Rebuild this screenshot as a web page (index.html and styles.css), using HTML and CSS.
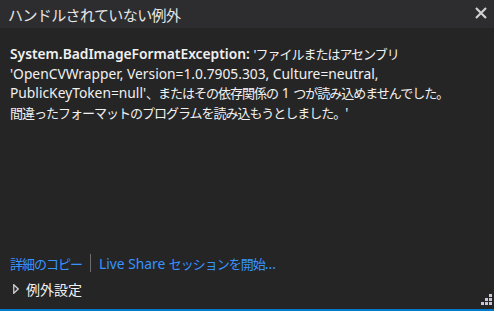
FILE: index.html
```html
<!DOCTYPE html>
<html lang="ja">
<head>
    <meta charset="UTF-8">
    <title>ハンドルされていない例外</title>
    <link rel="stylesheet" href="styles.css">
</head>
<body>
    <div class="popup">
        <div class="title-bar">
            <span class="title">ハンドルされていない例外</span>
            <svg class="close" width="12" height="12" viewBox="0 0 12 12">
                <path d="M1 1 L11 11 M11 1 L1 11" stroke="#d0d0d0" stroke-width="2.2"/>
            </svg>
        </div>
        <div class="content">
            <!-- 日本語部分は字詰めを狭くする -->
            <p class="message"><b>System.BadImageFormatException:</b> <span class="ja">'ファイルまたはアセンブリ</span><br>'OpenCVWrapper, Version=1.0.7905.303, Culture=neutral,<br>PublicKeyToken=null'<span class="ja">、またはその依存関係の</span> 1 <span class="ja">つが読み込めませんでした。</span><br><span class="ja">間違ったフォーマットのプログラムを読み込もうとしました。</span>'</p>
        </div>
        <div class="links">
            <a href="#"><span class="ja">詳細のコピー</span></a>
            <span class="sep"></span>
            <a href="#">Live Share <span class="ja">セッションを開始</span>...</a>
        </div>
        <div class="settings">
            <svg class="arrow" width="6" height="10" viewBox="0 0 6 10">
                <path d="M0.75 0.75 L5.2 5 L0.75 9.25 Z" fill="none" stroke="#cfcfcf" stroke-width="1.3"/>
            </svg>
            <span>例外設定</span>
        </div>
        <svg class="grip" width="12" height="12" viewBox="0 0 12 12">
            <rect x="8" y="0" width="3" height="3" fill="#c8c8d8"/>
            <rect x="4" y="4" width="3" height="3" fill="#c8c8d8"/>
            <rect x="8" y="4" width="3" height="3" fill="#c8c8d8"/>
            <rect x="0" y="8" width="3" height="3" fill="#c8c8d8"/>
            <rect x="4" y="8" width="3" height="3" fill="#c8c8d8"/>
            <rect x="8" y="8" width="3" height="3" fill="#c8c8d8"/>
        </svg>
    </div>
</body>
</html>
```

FILE: styles.css
```css
body {
    margin: 0;
    padding: 0;
    background-color: #252526;
    font-family: "Noto Sans", "Noto Sans CJK JP", sans-serif;
    color: #f1f1f1;
}

.popup {
    position: relative;
    width: 494px;
    height: 311px;
    box-sizing: border-box;
    border-bottom: 2px solid #007acc;
    display: flex;
    flex-direction: column;
}

.title-bar {
    height: 28px;
    background-color: #2d2d30;
    display: flex;
    align-items: center;
    justify-content: space-between;
    padding: 0 7px 0 8px;
}

.title {
    font-size: 15px;
    letter-spacing: -0.6px;
    color: #e6e6e6;
}

.close {
    margin-top: -2px;
}

.content {
    flex: 1;
    padding: 16px 10px 0 10px;
}

.message {
    margin: 0;
    font-size: 13.8px;
    line-height: 19px;
    white-space: nowrap;
    color: #f1f1f1;
}

.message b {
    font-weight: 600;
}

.ja {
    font-size: 13px;
    letter-spacing: -1px;
}

.links {
    display: flex;
    align-items: center;
    padding: 0 10px;
    height: 22px;
    font-size: 13.8px;
}

.links a {
    color: #3794ff;
    text-decoration: none;
}

.sep {
    width: 1px;
    height: 18px;
    background-color: #6e6e6e;
    margin: 0 8px;
}

.settings {
    display: flex;
    align-items: center;
    gap: 7px;
    padding: 4px 13px 0 13px;
    height: 26px;
    box-sizing: border-box;
    font-size: 14px;
    color: #f1f1f1;
    margin-bottom: 9px;
}

.grip {
    position: absolute;
    right: 1px;
    bottom: 3px;
}
```
